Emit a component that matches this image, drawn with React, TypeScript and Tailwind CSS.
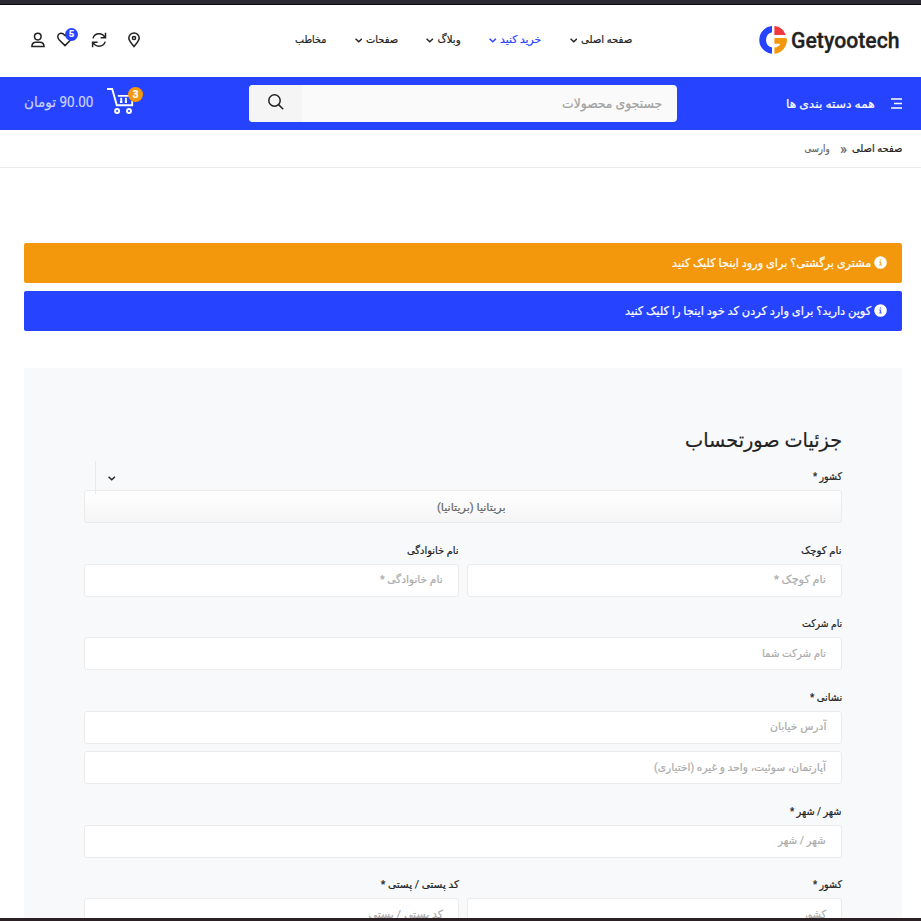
import { useLayoutEffect, useRef, useState } from "react";
import type { ReactNode } from "react";

/* One line of text fitted to a fixed width. */
function Fit({ w, ltr = false, className = "", children }: { w: number; ltr?: boolean; className?: string; children: ReactNode }) {
  const ref = useRef<HTMLSpanElement>(null);
  const [scale, setScale] = useState(1);
  useLayoutEffect(() => {
    if (ref.current) setScale(w / ref.current.offsetWidth);
  }, [w]);
  return (
    <span className={`block shrink-0 whitespace-nowrap ${className}`} style={{ width: w }} dir={ltr ? "ltr" : "rtl"}>
      <span ref={ref} className={ltr ? "inline-block origin-left" : "inline-block origin-right"} style={{ transform: `scaleX(${scale})` }}>
        {children}
      </span>
    </span>
  );
}

function Chevron({ className = "" }: { className?: string }) {
  return (
    <svg className={`h-[5px] w-[7.5px] shrink-0 ${className}`} viewBox="0 0 8 5" fill="none" stroke="currentColor" strokeWidth="1.5">
      <path d="M.6.7 4 3.9 7.4.7" />
    </svg>
  );
}

function Logo() {
  return (
    <svg className="h-7 w-7 shrink-0" viewBox="0 0 28 28">
      <path d="M13 .1A13.9 13.9 0 0 0 13 27.8V21.6A7.9 7.9 0 0 1 13 6.3Z" fill="#2643ff" />
      <path d="M15.4.1A13.4 13.4 0 0 1 26.8 9.1H15.4Z" fill="#f1393f" />
      <path d="M15.4 12H27.7A13.6 13.6 0 0 1 15.4 27.8V21.6C18.4 21.2 20.6 19.8 21.4 17.7H15.4Z" fill="#f3980c" />
    </svg>
  );
}

function InfoIcon({ fill }: { fill: string }) {
  return (
    <svg className="-mt-0.5 h-[13px] w-[13px] shrink-0" viewBox="0 0 13 13">
      <circle cx="6.5" cy="6.5" r="6.3" fill="#fff" />
      <path d="M5.8 3.2h1.4v1.4H5.8zM5.2 5.6h2v2.9h.6v1H5.2v-1h.6V6.6h-.6z" fill={fill} fillOpacity=".8" />
    </svg>
  );
}

const navItems = [
  { text: "صفحه اصلی", w: 51, more: true },
  { text: "خرید کنید", w: 41, more: true, active: true },
  { text: "وبلاگ", w: 23.5, more: true },
  { text: "صفحات", w: 32, more: true },
  { text: "مخاطب", w: 31, more: false },
];

function Header() {
  return (
    <header className="flex h-[72px] items-center bg-white pr-[21px] pb-[3px] pl-[30px] text-[#222]">
      <div className="flex items-center gap-1" dir="ltr">
        <Logo />
        <Fit ltr w={109} className="mt-0.5 text-[22px] leading-7 font-medium [-webkit-text-stroke:0.3px_#222]">Getyootech</Fit>
      </div>
      <nav className="mr-[127px] flex items-center gap-7 text-[10.5px] leading-4">
        {navItems.map((n) => (
          <div key={n.text} className={n.active ? "flex items-center gap-1 text-[#2643ff]" : "flex items-center gap-1"}>
            <Fit w={n.w}>{n.text}</Fit>
            {n.more && <Chevron className="mt-0.5" />}
          </div>
        ))}
      </nav>
      <div className="mr-auto flex items-center" dir="ltr">
        <svg className="h-4 w-4" viewBox="0 0 16 16" fill="none" stroke="#222" strokeWidth="1.5">
          <circle cx="7.8" cy="4.6" r="3.3" />
          <path d="M1.9 14.6c0-3.1 1.7-4.3 4-4.3h3.9c2.4 0 4.2 1.2 4.2 4.3Z" />
        </svg>
        <div className="relative ml-[11px]">
          <svg className="h-4 w-4" viewBox="0 0 16 16" fill="none" stroke="#222" strokeWidth="1.5">
            <path d="M8 13.6 2.1 7.7C.2 5.6 .6 3.2 2 2c1.8-1.4 4-.8 6 1.4 2-2.2 4.2-2.8 6-1.4 1.4 1.2 1.8 3.6-.1 5.7Z" />
          </svg>
          <span className="absolute -top-[4px] left-[8px] flex h-[13px] w-[13px] items-center justify-center rounded-full bg-[#2643ff] text-[9.5px] leading-none font-bold text-white">5</span>
        </div>
        <svg className="ml-[18px] h-4 w-4" viewBox="0 0 16 16" fill="none" stroke="#222" strokeWidth="1.5">
          <path d="M2 6.4C2.8 3.4 5 1.8 8 1.8c2.8 0 4.7 1.4 5.8 3.7M14.5.8v5H9.6M14.2 9.6c-.9 3-3.2 4.6-6.2 4.6-2.8 0-4.7-1.4-5.8-3.7M1.6 15.3v-5h5" />
        </svg>
        <svg className="ml-[19px] h-4 w-4" viewBox="0 0 16 16" fill="none" stroke="#222" strokeWidth="1.5">
          <path d="M8 14.5C5.6 11.5 2.8 8.9 2.8 6.1a5.2 5.2 0 0 1 10.4 0C13.2 8.9 10.4 11.5 8 14.5Z" />
          <circle cx="8" cy="6" r="1.6" />
        </svg>
      </div>
    </header>
  );
}

function SearchBar() {
  return (
    <div className="flex h-[53px] items-center bg-[#2643ff] pr-[19px] pl-6 text-white">
      <svg className="h-[11px] w-[11px]" viewBox="0 0 11 11" fill="#fff">
        <path d="M0 .3h11v1.4H0zM3 4.8h8v1.4H3zM0 9.3h11v1.4H0z" />
      </svg>
      <Fit w={89} className="mr-4 text-[12px] leading-5">همه دسته بندی ها</Fit>
      <div className="mr-[109px] flex h-[37px] w-[428px] items-center overflow-hidden rounded-[4px] bg-[#fafafa]">
        <Fit w={100} className="-mt-px mr-[15px] text-[13.5px] leading-5 text-[#a2a2a2]">جستجوی محصولات</Fit>
        <div className="mr-auto flex h-full w-[53px] items-center justify-center bg-[#f5f5f5]">
          <svg className="-mt-1 h-4 w-4" viewBox="0 0 16 16" fill="none" stroke="#222" strokeWidth="1.5">
            <circle cx="6.5" cy="6.5" r="5.7" />
            <path d="m10.6 10.6 4.6 4.6" />
          </svg>
        </div>
      </div>
      <div className="mr-auto flex items-center">
        <div className="relative -mt-[5px]" dir="ltr">
          <svg className="h-[28px] w-[36px]" viewBox="0 0 36 28" fill="none" stroke="#fff" strokeWidth="1.9">
            <path d="M0 2h5.2L9.8 18.3H25.2V14M10.8 8.9h12M14.2 10.8v4.4M18.9 10.8v4.4M13 15h2.4M17.8 15h2.2" />
            <circle cx="10.1" cy="24" r="2" />
            <circle cx="22" cy="24" r="2" />
          </svg>
          <span className="absolute top-0 left-[21px] flex h-[15px] w-[15px] items-center justify-center rounded-full bg-[#f3980c] text-[10px] leading-none font-bold">3</span>
        </div>
        <Fit w={69} className="-mt-0.5 mr-[14px] text-[14.5px] leading-5 text-[#ccd3ff]">90.00 تومان</Fit>
      </div>
    </div>
  );
}

function Alert({ color, text, w }: { color: string; text: string; w: number }) {
  return (
    <div className="flex h-10 items-center gap-[3px] rounded-[2px] pr-[15px] text-white" style={{ backgroundColor: color }}>
      <InfoIcon fill={color} />
      <Fit w={w} className="text-[12px] leading-5">{text}</Fit>
    </div>
  );
}

function Field({ label, labelW, hint, hintW }: { label?: string; labelW?: number; hint: string; hintW: number }) {
  return (
    <div className="flex-1">
      {label && (
        <div className="flex h-[40.5px] items-end pb-[5px]">
          <Fit w={labelW ?? 0} className="text-[10.5px] leading-4">{label}</Fit>
        </div>
      )}
      <div className="flex h-[33px] items-center rounded-[3px] border border-[#ebebeb] bg-white pr-[15px]">
        <Fit w={hintW} className="text-[11px] leading-4 text-[#ababab]">{hint}</Fit>
      </div>
    </div>
  );
}

export default function App() {
  return (
    <div dir="rtl" className="flex h-[921px] w-[921px] flex-col overflow-hidden bg-white font-[Roboto,'DejaVu_Sans',sans-serif] text-[#222] [-webkit-text-stroke:0.2px_currentColor]">
      <div className="h-[5px] shrink-0 border-b border-[#0c0c0d] bg-[#2b2a33]" />
      <Header />
      <SearchBar />
      <div className="flex h-[38px] shrink-0 items-center border-b border-[#ebebeb] pr-[19px] text-[10.5px] leading-4">
        <Fit w={50}>صفحه اصلی</Fit>
        <span className="mr-[5px] block w-2 text-[15px] text-[#666]">«</span>
        <Fit w={25.5} className="mr-[9px] text-[#666]">وارسی</Fit>
      </div>
      <main className="flex min-h-0 flex-1 flex-col overflow-hidden pt-[75px] pr-[19px] pl-6">
        <div className="flex shrink-0 flex-col gap-2">
          <Alert color="#f3980c" text="مشتری برگشتی؟ برای ورود اینجا کلیک کنید" w={199} />
          <Alert color="#2643ff" text="کوپن دارید؟ برای وارد کردن کد خود اینجا را کلیک کنید" w={246} />
        </div>
        <section className="mt-[37px] h-[650px] shrink-0 bg-[#f8f9fb] px-[60px] pt-[55px]">
          <h2 className="h-[34px]">
            <Fit w={157} className="text-[20px] leading-[34px]">جزئیات صورتحساب</Fit>
          </h2>
          <div className="relative flex h-[33px] items-end pb-[5px]">
            <Fit w={29} className="text-[10.5px] leading-4">کشور *</Fit>
            <div className="absolute top-[4px] left-[11px] z-10 flex h-[33px] items-center border-l border-[#ebebeb] pt-px pl-[12px]">
              <Chevron />
            </div>
          </div>
          <div className="flex h-[33px] items-center rounded-[3px] border border-[#ebebeb] bg-linear-to-b from-white to-[#f5f5f5] pt-0.5 pr-[335px]">
            <Fit w={69} className="text-[11px] leading-4 text-[#666]">بریتانیا (بریتانیا)</Fit>
          </div>
          <div className="flex gap-2">
            <Field label="نام کوچک" labelW={41} hint="نام کوچک *" hintW={52} />
            <Field label="نام خانوادگی" labelW={52} hint="نام خانوادگی *" hintW={63} />
          </div>
          <Field label="نام شرکت" labelW={40} hint="نام شرکت شما" hintW={64} />
          <Field label="نشانی *" labelW={32} hint="آدرس خیابان" hintW={56} />
          <div className="pt-[7.5px]">
            <Field hint="آپارتمان، سوئیت، واحد و غیره (اختیاری)" hintW={172} />
          </div>
          <Field label="شهر / شهر *" labelW={52} hint="شهر / شهر" hintW={48} />
          <div className="flex gap-2">
            <Field label="کشور *" labelW={29} hint="کشور" hintW={23} />
            <Field label="کد پستی / پستی *" labelW={78} hint="کد پستی / پستی" hintW={74} />
          </div>
        </section>
      </main>
      <div className="h-[3px] shrink-0 bg-[#2b2024]" />
    </div>
  );
}
